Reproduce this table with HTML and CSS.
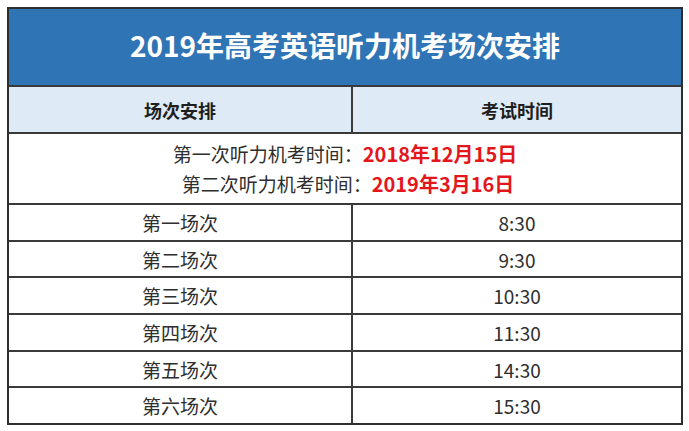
FILE: index.html
```html
<!DOCTYPE html>
<html lang="zh-CN">
<head>
<meta charset="utf-8">
<title>2019年高考英语听力机考场次安排</title>
<link rel="stylesheet" href="styles.css">
</head>
<body>
<div class="sheet">
  <div class="title">2019年高考英语听力机考场次安排</div>
  <div class="row head">
    <div class="cell">场次安排</div>
    <div class="cell">考试时间</div>
  </div>
  <div class="info">
    <div class="line l1">第一次听力机考时间：<span class="red">2018年12月15日</span></div>
    <div class="line l2">第二次听力机考时间：<span class="red">2019年3月16日</span></div>
  </div>
  <div class="row data"><div class="cell">第一场次</div><div class="cell">8:30</div></div>
  <div class="row data"><div class="cell">第二场次</div><div class="cell">9:30</div></div>
  <div class="row data"><div class="cell">第三场次</div><div class="cell">10:30</div></div>
  <div class="row data"><div class="cell">第四场次</div><div class="cell">11:30</div></div>
  <div class="row data"><div class="cell">第五场次</div><div class="cell">14:30</div></div>
  <div class="row data"><div class="cell">第六场次</div><div class="cell">15:30</div></div>
</div>
</body>
</html>
```
FILE: styles.css
```css
html, body {
  margin: 0;
  padding: 0;
  background: #ffffff;
}
body {
  padding: 7px;
  font-family: "Noto Sans CJK SC", "Noto Sans", sans-serif;
  color: #2e2e2e;
}
.sheet {
  width: 676px;
  border: 2px solid #2e2e2e;
  box-sizing: border-box;
}
.title {
  height: 76px;
  background: #2f74b5;
  color: #ffffff;
  font-size: 28px;
  font-weight: bold;
  display: flex;
  align-items: center;
  justify-content: center;
  padding-bottom: 4px;
  box-sizing: border-box;
}
.row {
  display: grid;
  grid-template-columns: 344px 1fr;
  border-top: 2px solid #3a3a3a;
  box-sizing: border-box;
}
.row .cell {
  display: flex;
  align-items: center;
  justify-content: center;
}
.row .cell:first-child {
  border-right: 2px solid #3a3a3a;
}
.head {
  height: 47px;
  background: #deebf7;
  font-size: 18px;
  font-weight: bold;
  color: #1e1e1e;
}
.info {
  height: 71px;
  border-top: 2px solid #3a3a3a;
  box-sizing: border-box;
  display: flex;
  flex-direction: column;
  justify-content: center;
  align-items: center;
  font-size: 19px;
  line-height: 30px;
}
.line.l2 { margin-left: 6px; }
.red {
  color: #e3161c;
  font-weight: bold;
  font-size: 20px;
}
.data {
  height: 36.7px;
  font-size: 19px;
}
```
